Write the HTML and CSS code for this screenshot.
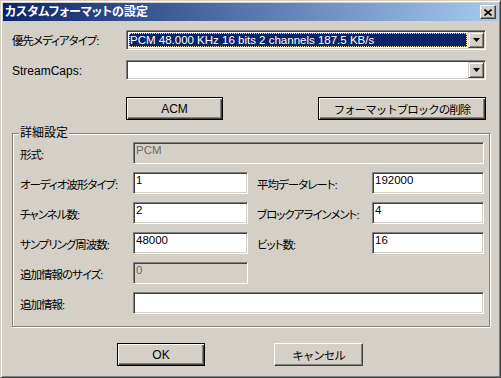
FILE: index.html
```html
<!DOCTYPE html>
<html lang="ja">
<head>
    <meta charset="UTF-8">
    <title>カスタムフォーマットの設定</title>
    <link rel="stylesheet" href="styles.css">
</head>
<body>
    <div class="window">
        <div class="titlebar">
            <span class="title">カスタムフォーマットの設定</span>
            <span class="close-btn">
                <svg width="8" height="7" viewBox="0 0 8 7"><path d="M0.5 0.5 L7.5 6.5 M7.5 0.5 L0.5 6.5" stroke="#000" stroke-width="1.6" fill="none"/></svg>
            </span>
        </div>
        <div class="client">
            <div class="row">
                <span class="top-label jp">優先メディアタイプ:</span>
                <div class="combo">
                    <div class="combo-value"><span class="selected">PCM 48.000 KHz 16 bits 2 channels 187.5 KB/s</span></div>
                    <span class="combo-arrow"><svg width="7" height="4" viewBox="0 0 7 4"><polygon points="0,0 7,0 3.5,4" fill="#000"/></svg></span>
                </div>
            </div>
            <div class="row row-second">
                <span class="top-label">StreamCaps:</span>
                <div class="combo">
                    <div class="combo-value"></div>
                    <span class="combo-arrow"><svg width="7" height="4" viewBox="0 0 7 4"><polygon points="0,0 7,0 3.5,4" fill="#000"/></svg></span>
                </div>
            </div>
            <div class="button-row">
                <button class="btn btn-default btn-acm">ACM</button>
                <button class="btn btn-default btn-delete jp">フォーマットブロックの削除</button>
            </div>

            <div class="group">
                <span class="group-title">詳細設定</span>
                <div class="group-grid">
                    <span class="label jp">形式:</span>
                    <div class="edit edit-disabled edit-full">PCM</div>

                    <span class="label jp">オーディオ波形タイプ:</span>
                    <div class="edit">1</div>
                    <span class="label jp">平均データレート:</span>
                    <div class="edit edit-right">192000</div>

                    <span class="label jp">チャンネル数:</span>
                    <div class="edit">2</div>
                    <span class="label jp">ブロックアラインメント:</span>
                    <div class="edit edit-right">4</div>

                    <span class="label jp">サンプリング周波数:</span>
                    <div class="edit">48000</div>
                    <span class="label jp">ビット数:</span>
                    <div class="edit edit-right">16</div>

                    <span class="label jp">追加情報のサイズ:</span>
                    <div class="edit edit-disabled">0</div>
                    <span></span>
                    <span></span>

                    <span class="label jp">追加情報:</span>
                    <div class="edit edit-full"></div>
                </div>
            </div>

            <div class="footer">
                <button class="btn btn-default btn-ok">OK</button>
                <button class="btn btn-cancel jp">キャンセル</button>
            </div>
        </div>
    </div>
</body>
</html>
```

FILE: styles.css
```css
body {
    margin: 0;
    background: #d4d0c8;
    font-family: "Liberation Sans", "Noto Sans CJK JP", sans-serif;
    font-size: 12px;
    font-feature-settings: "palt";
    color: #000;
}
.jp {
    font-size: 11.5px;
    letter-spacing: -1px;
}
.window {
    width: 501px;
    height: 378px;
    box-sizing: border-box;
    border: 1px solid;
    border-color: #d4d0c8 #404040 #404040 #d4d0c8;
    box-shadow: inset 1px 1px #fff, inset -1px -1px #808080;
    padding: 2px;
    background: #d4d0c8;
}
.titlebar {
    height: 18px;
    display: flex;
    align-items: center;
    justify-content: space-between;
    padding: 0 2px;
    background: linear-gradient(to right, #0a246a, #a6caf0);
}
.title {
    color: #fff;
    font-weight: bold;
    font-size: 12px;
    line-height: 18px;
}
.close-btn {
    width: 16px;
    height: 14px;
    box-sizing: border-box;
    display: flex;
    align-items: center;
    justify-content: center;
    background: #d4d0c8;
    border: 1px solid;
    border-color: #fff #404040 #404040 #fff;
    box-shadow: inset -1px -1px #808080;
}
.client {
    padding: 9px 0 0 9px;
}
.row {
    display: flex;
    height: 20px;
}
.row-second {
    margin-top: 10px;
}
.top-label {
    width: 114px;
    padding-top: 3px;
    line-height: 16px;
}
.combo {
    width: 360px;
    height: 20px;
    box-sizing: border-box;
    display: flex;
    background: #fff;
    border: 1px solid;
    border-color: #808080 #fff #fff #808080;
    box-shadow: inset 1px 1px #404040, inset -1px -1px #d4d0c8;
    padding: 1px;
}
.combo-value {
    flex: 1;
    display: flex;
    padding: 1px;
}
.selected {
    flex: 1;
    background: #0a246a;
    color: #fff;
    border: 1px dotted #e8e0a0;
    font-size: 11.5px;
    line-height: 12px;
}
.combo-arrow {
    width: 16px;
    height: 16px;
    box-sizing: border-box;
    display: flex;
    align-items: center;
    justify-content: center;
    background: #d4d0c8;
    border: 1px solid;
    border-color: #d4d0c8 #404040 #404040 #d4d0c8;
    box-shadow: inset 1px 1px #fff, inset -1px -1px #808080;
}
.button-row {
    display: flex;
    margin-top: 17px;
    padding-left: 114px;
}
.btn {
    height: 23px;
    box-sizing: border-box;
    padding: 0;
    font-family: inherit;
    font-size: 12px;
    color: #000;
    background: #d4d0c8;
    border: 1px solid;
    border-color: #fff #404040 #404040 #fff;
    box-shadow: inset -1px -1px #808080;
}
.btn.jp {
    font-size: 11.5px;
}
.btn-default {
    border-color: #000;
    box-shadow: inset 1px 1px #fff, inset -1px -1px #404040, inset -2px -2px #808080;
}
.btn-acm {
    width: 97px;
}
.btn-delete {
    width: 168px;
    margin-left: 95px;
}
.group {
    position: relative;
    width: 478px;
    box-sizing: border-box;
    margin-top: 13px;
    border: 1px solid #808080;
    box-shadow: inset 1px 1px #fff, 1px 1px #fff;
}
.group-title {
    position: absolute;
    top: -9px;
    left: 6px;
    padding: 0 1px;
    line-height: 16px;
    background: #d4d0c8;
}
.group-grid {
    display: grid;
    grid-template-columns: 113px 124px 115px 112px;
    grid-auto-rows: 22px;
    row-gap: 8px;
    padding: 8px 0 12px 7px;
}
.label {
    padding-top: 5px;
    line-height: 16px;
    white-space: nowrap;
}
.edit {
    width: 115px;
    height: 22px;
    box-sizing: border-box;
    background: #fff;
    border: 1px solid;
    border-color: #808080 #fff #fff #808080;
    box-shadow: inset 1px 1px #404040, inset -1px -1px #d4d0c8;
    padding: 0 0 0 2px;
    font-size: 11.5px;
    line-height: 15px;
}
.edit-right {
    width: 112px;
}
.edit-full {
    grid-column: 2 / -1;
    width: 351px;
}
.edit-disabled {
    background: #d4d0c8;
    color: #6a6a6a;
}
.footer {
    display: flex;
    margin-top: 16px;
    padding-left: 105px;
}
.btn-ok {
    width: 88px;
}
.btn-cancel {
    width: 89px;
    margin-left: 69px;
}
```
